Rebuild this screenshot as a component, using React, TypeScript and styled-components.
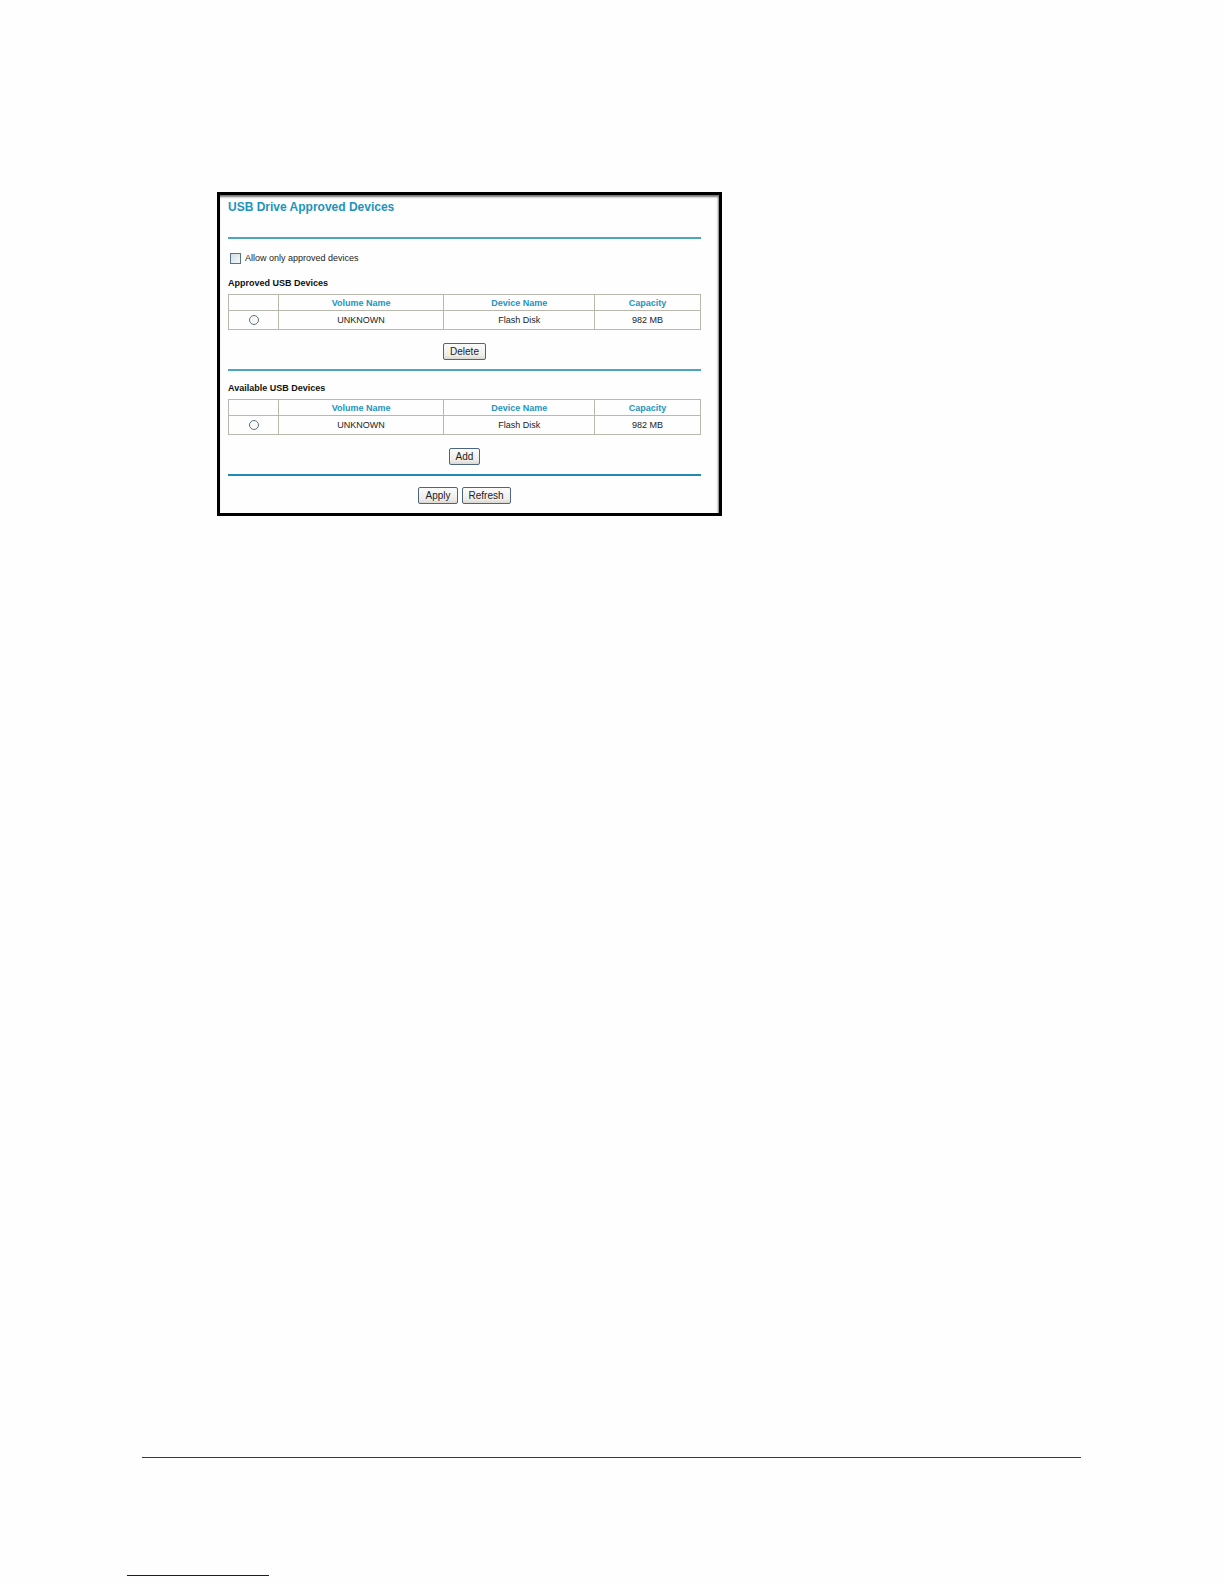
import React from "react";
import styled, { createGlobalStyle } from "styled-components";

const GlobalStyle = createGlobalStyle`
    * {
        box-sizing: border-box;
    }
    body {
        margin: 0;
        background: #fefefe;
        color: #222;
        font-family: "Liberation Sans", Arial, sans-serif;
        font-size: 9px;
        line-height: 12px;
    }
`;

const Page = styled.div`
    min-height: 100vh;
    display: flex;
    flex-direction: column;
    padding: 192px 143px 8px 142px;
`;

const Panel = styled.main`
    width: 100%;
    max-width: 505px;
    margin-left: 75px;
    padding: 5px 18px 9px 8px;
    border: 3px solid #000;
    background: #fefefe;
    box-shadow: inset -1px 2px 2px #777;
`;

const PanelTitle = styled.h1`
    margin: 0 0 23px;
    color: #1d94bd;
    font-size: 12px;
    line-height: 14px;
    font-weight: bold;
`;

const Divider = styled.hr<{ $color?: string }>`
    height: 2px;
    margin: 0;
    border: 0;
    background: ${({ $color }) => $color || "#4aa5c5"};
`;

const SectionDivider = styled(Divider)`
    margin-bottom: 11px;
`;

const CheckLabel = styled.label`
    display: flex;
    align-items: center;
    gap: 4px;
    margin: 13px 0 13px 2px;
`;

const Checkbox = styled.input`
    appearance: none;
    width: 11px;
    height: 11px;
    margin: 0;
    border: 1px solid #55758c;
    background: linear-gradient(135deg, #d5dce0, #f4f8fa);
    &:checked {
        background: #2b8fb5;
    }
`;

const Section = styled.section`
    display: flex;
    flex-direction: column;
`;

const SectionTitle = styled.h2`
    margin: 0 0 5px;
    color: #111;
    font-size: 9px;
    line-height: 12px;
    font-weight: bold;
`;

const Table = styled.table`
    width: 100%;
    table-layout: fixed;
    border-collapse: collapse;
    text-align: center;
`;

const Column = styled.col<{ $width?: string }>`
    width: ${({ $width }) => $width || "auto"};
`;

const HeadCell = styled.th`
    height: 16px;
    padding: 0;
    border: 1px solid #b9b8ac;
    color: #2295c0;
    font-weight: bold;
`;

const Cell = styled.td`
    height: 19px;
    padding: 0;
    border: 1px solid #b9b8ac;
`;

const Radio = styled.input`
    appearance: none;
    display: block;
    width: 10px;
    height: 10px;
    margin: 0 auto;
    border: 1px solid #60717c;
    border-radius: 50%;
    background: #f8f9f9;
    &:checked {
        box-shadow: inset 0 0 0 2px #f8f9f9;
        background: #3a8a3a;
    }
`;

const ButtonRow = styled.div<{ $spaced?: boolean }>`
    display: flex;
    justify-content: center;
    gap: 4px;
    padding: ${({ $spaced }) => ($spaced ? "13px 0 9px" : "11px 0 0")};
`;

const Button = styled.button`
    height: 17px;
    padding: 0 6px;
    border: 1px solid #4c6680;
    border-radius: 2px;
    background: linear-gradient(#fbfbfa, #eeede9 75%, #d9d8d3);
    color: #222;
    font-family: inherit;
    font-size: 10px;
    line-height: 14px;
`;

const Footer = styled.footer`
    margin-top: auto;
`;

const FooterRule = styled.hr`
    height: 1px;
    margin: 0 0 117px;
    border: 0;
    background: #3c3068;
`;

const FooterMark = styled.hr`
    width: 142px;
    height: 1px;
    margin: 0 0 0 -15px;
    border: 0;
    background: #12127c;
`;

interface DeviceSectionProps {
    title: string;
    name: string;
    action: string;
}

const DeviceSection = ({ title, name, action }: DeviceSectionProps) => {
    return (
        <Section>
            <SectionTitle>{title}</SectionTitle>
            <Table>
                <colgroup>
                    <Column $width="50px" />
                    <Column $width="35%" />
                    <Column $width="32%" />
                    <Column />
                </colgroup>
                <thead>
                    <tr>
                        <HeadCell />
                        <HeadCell scope="col">Volume Name</HeadCell>
                        <HeadCell scope="col">Device Name</HeadCell>
                        <HeadCell scope="col">Capacity</HeadCell>
                    </tr>
                </thead>
                <tbody>
                    <tr>
                        <Cell>
                            <Radio
                                type="radio"
                                name={name}
                                aria-label="UNKNOWN"
                            />
                        </Cell>
                        <Cell>UNKNOWN</Cell>
                        <Cell>Flash Disk</Cell>
                        <Cell>982 MB</Cell>
                    </tr>
                </tbody>
            </Table>
            <ButtonRow $spaced>
                <Button type="button">{action}</Button>
            </ButtonRow>
        </Section>
    );
};

const App = () => {
    return (
        <>
            <GlobalStyle />
            <Page>
                <Panel>
                    <PanelTitle>USB Drive Approved Devices</PanelTitle>
                    <Divider />
                    <CheckLabel>
                        <Checkbox type="checkbox" />
                        Allow only approved devices
                    </CheckLabel>
                    <DeviceSection
                        title="Approved USB Devices"
                        name="approved"
                        action="Delete"
                    />
                    <SectionDivider />
                    <DeviceSection
                        title="Available USB Devices"
                        name="available"
                        action="Add"
                    />
                    <Divider $color="#2389b0" />
                    <ButtonRow>
                        <Button type="button">Apply</Button>
                        <Button type="button">Refresh</Button>
                    </ButtonRow>
                </Panel>
                <Footer>
                    <FooterRule />
                    <FooterMark />
                </Footer>
            </Page>
        </>
    );
};

export default App;
